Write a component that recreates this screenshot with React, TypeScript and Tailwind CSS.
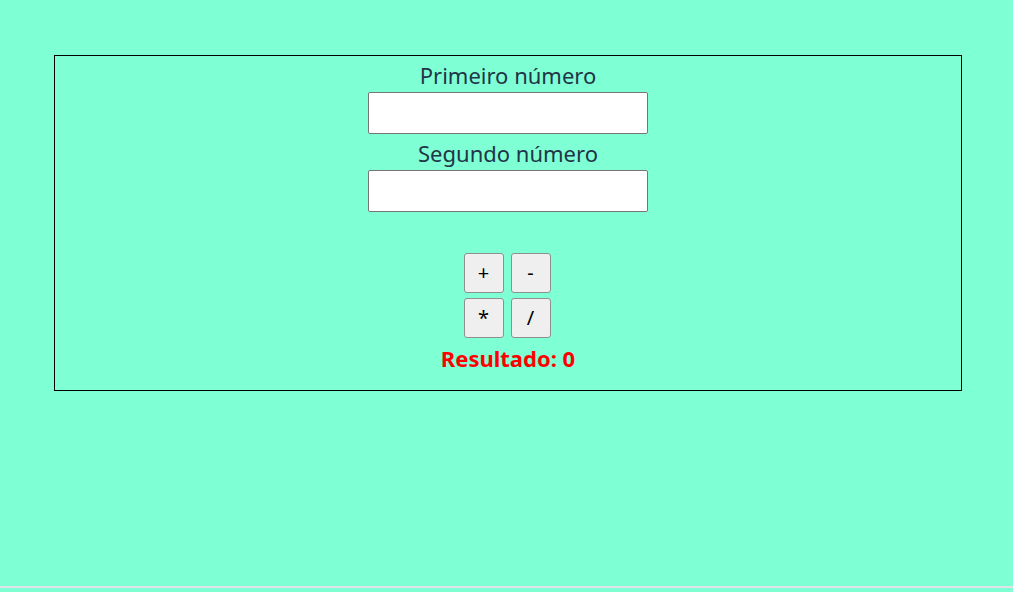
export default function App() {
  return (
    <div className="min-h-[592px] w-full bg-[#7fffd4] flex flex-col font-['Noto_Sans','Open_Sans',sans-serif] text-[#213547]">
      <div className="h-[55px]" />
      <div className="ml-[54px] w-[908px] border border-black flex flex-col items-center pb-[14px]">
        <label className="h-[36px] leading-[38px] text-[22px]">Primeiro número</label>
        <input
          type="text"
          className="w-[280px] h-[42px] bg-white border border-[#767676] rounded-[2px]"
        />
        <label className="h-[36px] leading-[38px] text-[22px]">Segundo número</label>
        <input
          type="text"
          className="w-[280px] h-[42px] bg-white border border-[#767676] rounded-[2px]"
        />
        <div className="mt-[41px] mr-[2px] grid grid-cols-2 gap-x-[7px] gap-y-[5px]">
          {["+", "-", "*", "/"].map((op) => (
            <button
              key={op}
              className="w-[40px] h-[40px] bg-[#efefef] border border-[#8f8f8f] rounded-[3px] text-[20px] text-black flex items-center justify-center"
            >
              {op}
            </button>
          ))}
        </div>
        <div className="mt-[2px] h-[36px] leading-[36px] text-[22px] font-bold text-[#ff0000]">
          Resultado: 0
        </div>
      </div>
      <div className="flex-1" />
      <div className="h-[2px] bg-[#e2e2ea] mb-[4px]" />
    </div>
  );
}
